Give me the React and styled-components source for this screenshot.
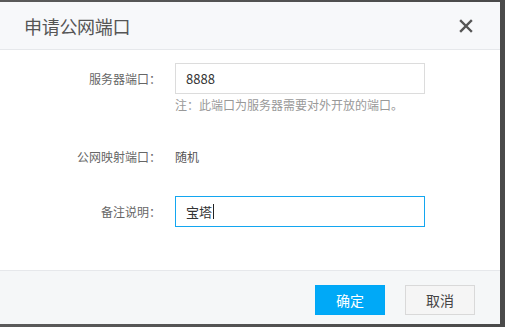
import styled, { createGlobalStyle } from "styled-components";

const GlobalStyle = createGlobalStyle`
  html, body {
    margin: 0;
    padding: 0;
  }
  body {
    background: linear-gradient(90deg, #5a5a5a 0%, #4a4a4a 100%);
    font-family: "Noto Sans CJK SC", "Noto Sans", "Liberation Sans", sans-serif;
    width: 505px;
    height: 327px;
    overflow: hidden;
  }
`;

const Dialog = styled.div`
  width: 500px;
  height: 322px;
  margin-top: 2px;
  background: #fff;
  display: flex;
  flex-direction: column;
`;

const Header = styled.div`
  height: 47px;
  display: flex;
  align-items: center;
  justify-content: space-between;
  padding: 0 27px 0 24px;
  background: #f7f8fa;
  border-bottom: 1px solid #e6e8eb;
`;

const Title = styled.h3`
  margin: 0;
  font-size: 18px;
  font-weight: normal;
  color: #555;
  letter-spacing: -0.3px;
`;

const Close = styled.button`
  border: 0;
  padding: 0;
  background: none;
  width: 14px;
  height: 14px;
  display: flex;
  cursor: pointer;
`;

const Body = styled.div`
  flex: 1;
  padding-top: 13px;
`;

const Row = styled.div`
  display: flex;
  align-items: center;
  margin-top: ${(p) => p.$top || 0}px;
  height: 31px;
`;

const Label = styled.div`
  width: 161px;
  padding-right: 14px;
  text-align: right;
  font-size: 12px;
  color: #666;
`;

const Field = styled.div`
  width: 250px;
  height: 31px;
  box-sizing: border-box;
  border: 1px solid ${(p) => (p.$focus ? "#13a6f0" : "#dcdcdc")};
  padding-left: 10px;
  display: flex;
  align-items: center;
  font-size: 13px;
  color: #333;
`;

const Caret = styled.span`
  display: inline-block;
  width: 1px;
  height: 15px;
  background: #222;
  margin-left: 1px;
`;

const Value = styled.div`
  font-size: 12px;
  color: #555;
`;

const Note = styled.div`
  margin: 2px 0 0 175px;
  line-height: 18px;
  font-size: 12px;
  color: #999;
`;

const Footer = styled.div`
  height: 54px;
  box-sizing: border-box;
  border-top: 1px solid #e6e8eb;
  background: #f5f7f8;
  display: flex;
  justify-content: flex-end;
  gap: 20px;
  padding: 14px 25px 0 0;
`;

const Button = styled.button`
  width: 70px;
  height: 30px;
  box-sizing: border-box;
  font-family: inherit;
  font-size: 14px;
  cursor: pointer;
  border: 1px solid ${(p) => (p.$primary ? "#00a6f5" : "#d9d9d9")};
  background: ${(p) => (p.$primary ? "#00a9f7" : "#f5f5f5")};
  color: ${(p) => (p.$primary ? "#fff" : "#444")};
`;

export default function App() {
  return (
    <>
      <GlobalStyle />
      <Dialog>
        <Header>
          <Title>申请公网端口</Title>
          <Close aria-label="关闭">
            <svg width="14" height="14" viewBox="0 0 14 14">
              <path d="M2 2L12 12M12 2L2 12" stroke="#555" strokeWidth="2.4" strokeLinecap="square" />
            </svg>
          </Close>
        </Header>
        <Body>
          <Row>
            <Label>服务器端口：</Label>
            <Field>8888</Field>
          </Row>
          <Note>注：此端口为服务器需要对外开放的端口。</Note>
          <Row $top={27}>
            <Label>公网映射端口：</Label>
            <Value>随机</Value>
          </Row>
          <Row $top={24}>
            <Label>备注说明：</Label>
            <Field $focus>
              宝塔
              <Caret />
            </Field>
          </Row>
        </Body>
        <Footer>
          <Button $primary>确定</Button>
          <Button>取消</Button>
        </Footer>
      </Dialog>
    </>
  );
}
